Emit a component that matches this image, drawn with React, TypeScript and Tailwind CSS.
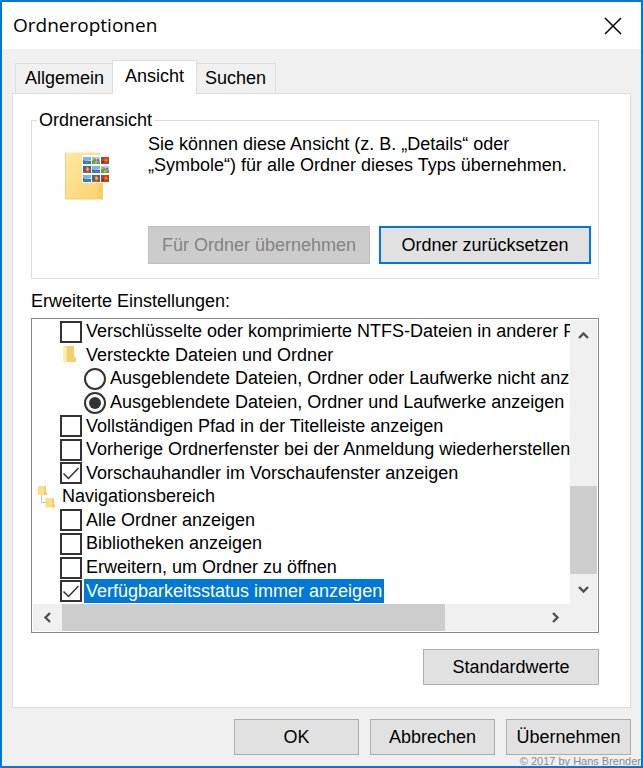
import React, { useState } from 'react'

type Option = {
  id: string
  label: string
  kind: 'check' | 'radio' | 'folder' | 'tree'
  on?: boolean
}

const OPTIONS: Option[] = [
  { id: 'ntfs', label: 'Verschlüsselte oder komprimierte NTFS-Dateien in anderer Farbe anzeigen', kind: 'check' },
  { id: 'hidden', label: 'Versteckte Dateien und Ordner', kind: 'folder' },
  { id: 'hidden-off', label: 'Ausgeblendete Dateien, Ordner oder Laufwerke nicht anzeigen', kind: 'radio' },
  { id: 'hidden-on', label: 'Ausgeblendete Dateien, Ordner und Laufwerke anzeigen', kind: 'radio', on: true },
  { id: 'full-path', label: 'Vollständigen Pfad in der Titelleiste anzeigen', kind: 'check' },
  { id: 'restore', label: 'Vorherige Ordnerfenster bei der Anmeldung wiederherstellen', kind: 'check' },
  { id: 'preview', label: 'Vorschauhandler im Vorschaufenster anzeigen', kind: 'check', on: true },
  { id: 'nav', label: 'Navigationsbereich', kind: 'tree' },
  { id: 'all-folders', label: 'Alle Ordner anzeigen', kind: 'check' },
  { id: 'libraries', label: 'Bibliotheken anzeigen', kind: 'check' },
  { id: 'expand', label: 'Erweitern, um Ordner zu öffnen', kind: 'check' },
  { id: 'availability', label: 'Verfügbarkeitsstatus immer anzeigen', kind: 'check', on: true },
]

const INDENT = { tree: 'pl-[3px]', folder: 'pl-[27px]', check: 'pl-[27px]', radio: 'pl-[51px]' }

const TABS = ['Allgemein', 'Ansicht', 'Suchen']

function FolderSmall() {
  return (
    <svg width="22" height="22" viewBox="0 0 22 22" className="shrink-0">
      <path d="M3 2h10v16H3z" fill="#fbe3a0" />
      <path d="M7 2h7v10l2 2v4H7z" fill="#f6cf6d" />
      <path d="M3 2l3 2v16l-3-2z" fill="#fdecb9" />
    </svg>
  )
}

function FolderTree() {
  return (
    <svg width="22" height="24" viewBox="0 0 22 24" className="shrink-0">
      <path d="M5.500 10v7.500H10" fill="none" stroke="#c4c4c4" />
      <path d="M2 1h8v9H2z" fill="#fbdf84" />
      <path d="M9 1h1v6l1 1v2H8z" fill="#f3cb60" />
      <path d="M9.500 13H18v9.500H9.500z" fill="#fbdf84" />
      <path d="M16.500 13H18v6l1 1v2.500h-3z" fill="#f3cb60" />
    </svg>
  )
}

function Thumb({ x, y, kind }: { x: number; y: number; kind: number }) {
  return (
    <g transform={`translate(${x} ${y})`}>
      <rect width="9" height="9" fill="#fff" />
      {kind === 0 && (
        <>
          <rect x="1" y="1" width="8" height="7" fill="#79b4ee" />
          <path d="M1 4.500l4 .5 4-1v1H1z" fill="#d9ecfb" />
          <path d="M1 4l3 1.500L9 5v1.500H1z" fill="#2d6b62" />
          <path d="M1 6.500h8V8H1z" fill="#3676b8" />
        </>
      )}
      {kind === 1 && (
        <>
          <rect x="1" y="1" width="8" height="7" fill="#a6d2ee" />
          <path d="M1 5l2-3 2 1 1 3 3-1v3H1z" fill="#58a63c" />
          <circle cx="3" cy="3" r="1.200" fill="#ee8b24" />
          <circle cx="7" cy="4" r="1.200" fill="#8d62c9" />
          <circle cx="5" cy="6.500" r="1" fill="#e9c93b" />
        </>
      )}
      {kind === 2 && (
        <>
          <rect x="1" y="1" width="8" height="7" fill="#d8371c" />
          <path d="M1 1h3L2 4 1 5zM6 7l3-2v3H5z" fill="#46752b" />
          <circle cx="6" cy="4" r="1.600" fill="#f0801c" />
          <circle cx="3" cy="6" r="1" fill="#8f1710" />
        </>
      )}
      {kind === 3 && (
        <>
          <rect x="1" y="1" width="8" height="7" fill="#2f63bb" />
          <path d="M3 2l3-1 2 3-1 4H3l1-3z" fill="#e04b20" />
          <path d="M5 2l2 2-1 2-2-1z" fill="#f5c02e" />
          <path d="M1 6l2 1v1H1z" fill="#3c9440" />
        </>
      )}
    </g>
  )
}

function FolderLarge() {
  const kinds = [0, 1, 2, 3, 0, 1, 0, 3, 2]
  return (
    <svg width="46" height="48" viewBox="0 0 46 48" className="mt-[21px] shrink-0">
      <defs>
        <linearGradient id="folder" x1="0" y1="0" x2="1" y2="1">
          <stop offset="0" stopColor="#ffe9a2" />
          <stop offset="1" stopColor="#fdd26a" />
        </linearGradient>
      </defs>
      <path d="M.5.500H35v31h3V47H.500z" fill="url(#folder)" />
      <path d="M32.500 31H38v16h-5.500z" fill="#fbd063" />
      <path d="M.5.500V47H38" fill="none" stroke="#f3cf78" />
      <rect x="17" y="3" width="28" height="28" fill="#fff" />
      {kinds.map((k, i) => (
        <Thumb key={i} x={17 + (i % 3) * 9} y={4 + Math.floor(i / 3) * 9} kind={k} />
      ))}
    </svg>
  )
}

function Arrow({ d, label, className }: { d: string; label: string; className: string }) {
  return (
    <button aria-label={label} className={`flex shrink-0 items-center justify-center ${className}`}>
      <svg width="11" height="11" viewBox="0 0 11 11">
        <path d={d} fill="none" stroke="#505050" strokeWidth="2.400" />
      </svg>
    </button>
  )
}

function PushButton({ children, className }: { children: React.ReactNode; className: string }) {
  return (
    <button className={`h-9 border border-[#adadad] bg-[#e1e1e1] hover:border-[#0078d7] hover:bg-[#e5f1fb] ${className}`}>
      {children}
    </button>
  )
}

function OptionRow({ option, selected, onSelect }: { option: Option; selected: boolean; onSelect: () => void }) {
  const { id, label, kind, on } = option
  const text = (
    <span className={`flex h-full items-center px-[2px] ${selected ? 'bg-[#0078d7] text-white' : ''}`}>{label}</span>
  )

  return (
    <li className={`flex min-h-0 flex-1 items-center whitespace-nowrap ${INDENT[kind]}`} onClick={onSelect}>
      {kind === 'folder' && <FolderSmall />}
      {kind === 'tree' && <FolderTree />}
      {kind === 'check' && (
        <span className="grid shrink-0 place-items-center">
          <input
            id={id}
            type="checkbox"
            defaultChecked={on}
            className="peer col-start-1 row-start-1 size-[22px] appearance-none border-2 border-[#333] bg-white outline-none"
          />
          <svg
            width="18"
            height="18"
            viewBox="0 0 18 18"
            className="pointer-events-none invisible col-start-1 row-start-1 peer-checked:visible"
          >
            <path d="M1.500 9.500l5 5L16.500 4" fill="none" stroke="#333" strokeWidth="1.500" />
          </svg>
        </span>
      )}
      {kind === 'radio' && (
        <span className="grid shrink-0 place-items-center">
          <input
            id={id}
            type="radio"
            name="hidden-files"
            defaultChecked={on}
            className="peer col-start-1 row-start-1 size-[22px] appearance-none rounded-full border-2 border-[#333] bg-white outline-none"
          />
          <span className="pointer-events-none invisible col-start-1 row-start-1 size-3 rounded-full bg-[#333] peer-checked:visible" />
        </span>
      )}
      {kind === 'check' || kind === 'radio' ? (
        <label htmlFor={id} className="ml-[2px] h-full">
          {text}
        </label>
      ) : (
        <span className="ml-[2px] h-full">{text}</span>
      )}
    </li>
  )
}

export default function App() {
  const [tab, setTab] = useState('Ansicht')
  const [selected, setSelected] = useState('availability')

  return (
    <div className="relative flex min-h-screen flex-col border-2 border-[#0078d7] bg-[#f0f0f0] font-['Liberation_Sans',Arial,sans-serif] text-[18px] leading-[21px] text-black">
      {/* Title bar */}
      <header className="flex h-[47px] items-center justify-between bg-white pl-[11px] pr-[18px]">
        <h1 className="font-['Open_Sans','Segoe_UI',sans-serif] text-[19px]">Ordneroptionen</h1>
        <button aria-label="Schließen" className="flex size-5 items-center justify-center">
          <svg width="18" height="18" viewBox="0 0 18 18">
            <path d="M1 1l16 16M17 1L1 17" stroke="#000" strokeWidth="1.500" />
          </svg>
        </button>
      </header>

      <main className="flex flex-1 flex-col px-[10px] pt-[11px]">
        {/* Tabs */}
        <div role="tablist" className="z-10 -mb-px flex items-end pl-[3px]">
          {TABS.map(t => (
            <button
              key={t}
              role="tab"
              aria-selected={t === tab}
              onClick={() => setTab(t)}
              className={
                t === tab
                  ? 'z-10 -mx-[2px] h-[34px] border border-b-0 border-[#dcdcdc] bg-white px-3 pb-[2px]'
                  : 'h-[31px] border border-[#dcdcdc] bg-[#f0f0f0] px-[9px]'
              }
            >
              {t}
            </button>
          ))}
        </div>

        <div role="tabpanel" className="flex flex-1 flex-col border border-[#dcdcdc] bg-white pb-[21px] pl-[18px] pr-[31px] pt-4">
          <fieldset className="border border-[#dcdcdc] pb-[14px] pl-[33px] pr-[7px]">
            <legend className="-ml-7 px-[2px]">Ordneransicht</legend>
            <div className="flex gap-[37px]">
              <FolderLarge />
              <div className="flex-1 pt-[3px]">
                <p>
                  Sie können diese Ansicht (z. B. „Details“ oder
                  <br />
                  „Symbole“) für alle Ordner dieses Typs übernehmen.
                </p>
                <div className="mt-[50px] flex gap-[9px]">
                  <button disabled className="h-[38px] flex-[223] border border-[#bfbfbf] bg-[#ccc] text-[#838383]">
                    Für Ordner übernehmen
                  </button>
                  <button className="h-[38px] flex-[211] border-2 border-[#0078d7] bg-[#e1e1e1]">
                    Ordner zurücksetzen
                  </button>
                </div>
              </div>
            </div>
          </fieldset>

          <h2 className="mt-3">Erweiterte Einstellungen:</h2>

          {/* Settings list */}
          <div className="mt-[6px] border border-[#828790] p-px">
            <div className="flex h-[284px]">
              <ul className="flex min-w-0 flex-1 flex-col overflow-hidden pb-px">
                {OPTIONS.map(o => (
                  <OptionRow key={o.id} option={o} selected={o.id === selected} onSelect={() => setSelected(o.id)} />
                ))}
              </ul>
              <div className="flex w-[27px] shrink-0 flex-col bg-[#f0f0f0]">
                <Arrow label="Nach oben" className="h-[30px]" d="M1 8l4.500-4.500L10 8" />
                <div className="flex-1" />
                <div className="h-[88px] bg-[#cdcdcd]" />
                <Arrow label="Nach unten" className="h-[30px]" d="M1 3l4.500 4.500L10 3" />
              </div>
            </div>
            <div className="flex h-[27px] bg-[#f0f0f0] pr-[27px]">
              <Arrow label="Nach links" className="w-[29px]" d="M8 1L3.500 5.500 8 10" />
              <div className="flex-1">
                <div className="h-full w-4/5 bg-[#cdcdcd]" />
              </div>
              <Arrow label="Nach rechts" className="w-[29px]" d="M3 1l4.500 4.500L3 10" />
            </div>
          </div>

          <PushButton className="mt-4 w-[176px] self-end">Standardwerte</PushButton>
        </div>

        <footer className="flex justify-end gap-[11px] pb-[11px] pt-[11px]">
          <PushButton className="w-[125px]">OK</PushButton>
          <PushButton className="w-[125px]">Abbrechen</PushButton>
          <PushButton className="w-[125px]">Übernehmen</PushButton>
        </footer>
      </main>

      <small className="absolute -bottom-px right-0 text-[11px] leading-3 text-[#8a8a8a]">© 2017 by Hans Brender</small>
    </div>
  )
}
